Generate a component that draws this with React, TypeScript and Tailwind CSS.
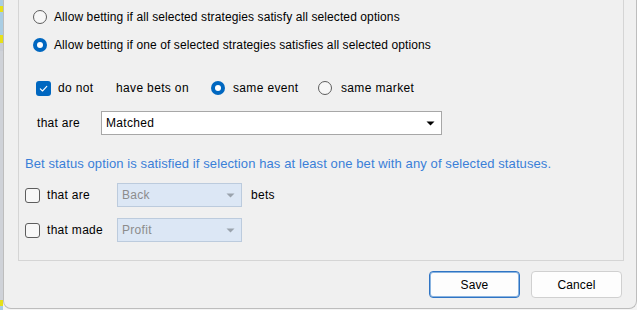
import React from "react";

const font = { fontFamily: '"Liberation Sans", Arial, sans-serif' };

function Radio({ checked }: { checked?: boolean }) {
  if (checked) {
    return (
      <span className="flex h-[14px] w-[14px] shrink-0 items-center justify-center rounded-full bg-[#0067c0]">
        <span className="h-[6px] w-[6px] rounded-full bg-white" />
      </span>
    );
  }
  return <span className="block h-[14px] w-[14px] shrink-0 rounded-full border border-[#5d5d5d] bg-[#f7f7f7]" />;
}

function Check({ checked }: { checked?: boolean }) {
  if (checked) {
    return (
      <span className="flex h-[15px] w-[15px] shrink-0 items-center justify-center rounded-[3px] bg-[#0067c0]">
        <svg width="11" height="11" viewBox="0 0 11 11">
          <path d="M2.3 5.8 L4.5 8 L8.8 3.4" fill="none" stroke="white" strokeWidth="1.1" strokeLinecap="round" strokeLinejoin="round" />
        </svg>
      </span>
    );
  }
  return <span className="block h-[15px] w-[15px] shrink-0 rounded-[3px] border border-[#5d5d5d] bg-[#f7f7f7]" />;
}

function Arrow({ color }: { color: string }) {
  return (
    <svg width="9" height="5" viewBox="0 0 9 5">
      <path d="M0.5 0.5 L8.5 0.5 L4.5 4.5 Z" fill={color} />
    </svg>
  );
}

export default function App() {
  return (
    <div className="flex h-[310px] w-[637px] overflow-hidden bg-[#f4f4f4] text-[12px] tracking-[0.1px] text-black" style={font}>
      <div className="flex w-[3px] shrink-0 flex-col">
        <div className="h-[6px] bg-[#a9cde3]" />
        <div className="h-[6px] bg-[#e6e01a]" />
        <div className="h-[23px] bg-[#a9cde3]" />
        <div className="h-[8px] bg-[#e6e01a]" />
        <div className="h-[8px] bg-[#c9cdd5]" />
        <div className="flex-1 bg-[#cfd2d8]" />
        <div className="h-[6px] bg-[#e6e01a]" />
        <div className="h-[4px] bg-[#a9cde3]" />
      </div>
      <div className="flex h-[309px] flex-1 flex-col rounded-b-[8px] border-b border-l border-r border-[#bdbdbd] bg-[#f0f0f0]">
        <div className="ml-[14px] flex h-[261px] w-[606px] flex-col border-x border-b border-[#d5d5d5]">
          <div className="mt-[7px] flex h-[20px] items-center">
            <span className="ml-[14px] w-[21px]"><Radio /></span>
            <span>Allow betting if all selected strategies satisfy all selected options</span>
          </div>
          <div className="mt-[8px] flex h-[20px] items-center">
            <span className="ml-[14px] w-[21px]"><Radio checked /></span>
            <span>Allow betting if one of selected strategies satisfies all selected options</span>
          </div>
          <div className="mt-[23px] flex h-[20px] items-center tracking-[0.35px]">
            <span className="ml-[17px] w-[22px]"><Check checked /></span>
            <span className="w-[58px]">do not</span>
            <span className="w-[95px]">have bets on</span>
            <span className="w-[22px]"><Radio checked /></span>
            <span className="w-[85px]">same event</span>
            <span className="w-[23px]"><Radio /></span>
            <span>same market</span>
          </div>
          <div className="mt-[13px] flex h-[24px] items-center tracking-[0.3px]">
            <span className="ml-[18px] w-[64px]">that are</span>
            <div className="flex h-[24px] w-[341px] items-center justify-between border border-[#a7a7a7] bg-white pl-[4px] pr-[6px]">
              <span>Matched</span>
              <Arrow color="#000" />
            </div>
          </div>
          <div className="mt-[19px] flex h-[20px] items-center">
            <span className="ml-[6px] text-[13px] tracking-[0.1px] text-[#3a7fd8]">Bet status option is satisfied if selection has at least one bet with any of selected statuses.</span>
          </div>
          <div className="mt-[9px] flex h-[24px] items-center tracking-[0.3px]">
            <span className="ml-[6px] w-[22px]"><Check /></span>
            <span className="w-[70px]">that are</span>
            <div className="flex h-[24px] w-[125px] items-center justify-between border border-[#bccbdd] bg-[#dce7f5] pl-[4px] pr-[6px]">
              <span className="text-[#8c8c8c]">Back</span>
              <Arrow color="#9aa3ad" />
            </div>
            <span className="ml-[9px]">bets</span>
          </div>
          <div className="mt-[11px] flex h-[24px] items-center tracking-[0.3px]">
            <span className="ml-[6px] w-[22px]"><Check /></span>
            <span className="w-[70px]">that made</span>
            <div className="flex h-[24px] w-[125px] items-center justify-between border border-[#bccbdd] bg-[#dce7f5] pl-[4px] pr-[6px]">
              <span className="text-[#8c8c8c]">Profit</span>
              <Arrow color="#9aa3ad" />
            </div>
          </div>
        </div>
        <div className="mt-[10px] flex justify-end gap-[11px] pr-[14px]">
          <button className="flex h-[27px] w-[91px] items-center justify-center rounded-[4px] border border-[#2f74c4] bg-[#fdfdfd] shadow-[inset_0_0_0_1px_#8ab4e0]">Save</button>
          <button className="flex h-[27px] w-[91px] items-center justify-center rounded-[4px] border border-[#d0d0d0] bg-[#fdfdfd]">Cancel</button>
        </div>
      </div>
    </div>
  );
}
